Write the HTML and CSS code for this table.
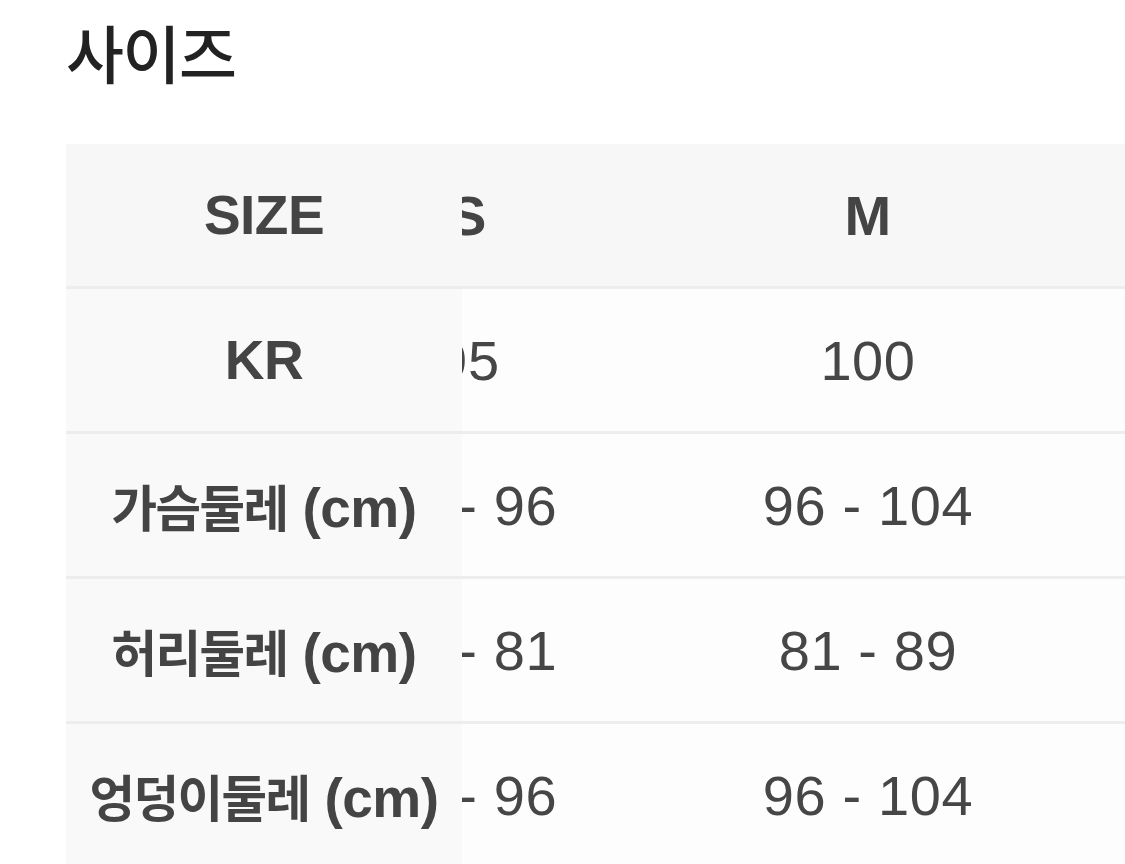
FILE: index.html
```html
<!DOCTYPE html>
<html lang="ko">
<head>
<meta charset="utf-8">
<title>사이즈</title>
<link rel="stylesheet" href="styles.css">
</head>
<body>
<section class="size-section">
  <h2 class="size-title">사이즈</h2>
  <div class="size-table">
    <div class="col col-fixed">
      <div class="cell cell-head cell-label"><span>SIZE</span></div>
      <div class="cell cell-label"><span>KR</span></div>
      <div class="cell cell-label"><span><span class="ko">가슴둘레</span> (cm)</span></div>
      <div class="cell cell-label"><span><span class="ko">허리둘레</span> (cm)</span></div>
      <div class="cell cell-label"><span><span class="ko">엉덩이둘레</span> (cm)</span></div>
    </div>
    <div class="scroll">
      <div class="track">
        <div class="col">
          <div class="cell cell-head">S</div>
          <div class="cell">95</div>
          <div class="cell">88 - 96</div>
          <div class="cell">73 - 81</div>
          <div class="cell">88 - 96</div>
        </div>
        <div class="col">
          <div class="cell cell-head">M</div>
          <div class="cell">100</div>
          <div class="cell">96 - 104</div>
          <div class="cell">81 - 89</div>
          <div class="cell">96 - 104</div>
        </div>
        <div class="col">
          <div class="cell cell-head">L</div>
          <div class="cell">105</div>
          <div class="cell">104 - 112</div>
          <div class="cell">89 - 97</div>
          <div class="cell">104 - 112</div>
        </div>
      </div>
    </div>
  </div>
</section>
</body>
</html>
```

FILE: styles.css
```css
html, body {
  margin: 0;
  padding: 0;
  background: #ffffff;
}

body {
  font-family: "Liberation Sans", "Noto Sans CJK KR", sans-serif;
  color: #444444;
  overflow: hidden;
}

.size-section {
  padding-left: 66px;
}

.size-title {
  margin: 0;
  padding-top: 15px;
  height: 144px;
  box-sizing: border-box;
  font-family: "Noto Sans CJK KR", sans-serif;
  font-size: 63px;
  font-weight: 500;
  line-height: 72px;
  color: #222222;
  letter-spacing: -1.5px;
}

.size-table {
  display: flex;
  overflow: hidden;
}

.col {
  display: flex;
  flex-direction: column;
  width: 400px;
  flex: 0 0 400px;
}

.col-fixed {
  width: 396px;
  flex: 0 0 396px;
  background: #f9f9f9;
  position: relative;
  z-index: 1;
}

.scroll {
  flex: 1;
  overflow: hidden;
}

.track {
  display: flex;
  margin-left: -194px;
}

.cell {
  height: 142px;
  border-bottom: 3px solid #ededed;
  display: flex;
  align-items: center;
  justify-content: center;
  font-size: 56px;
  letter-spacing: 0.6px;
  white-space: nowrap;
  background: #fdfdfd;
  color: #464646;
}

.col-fixed .cell {
  background: #f9f9f9;
}

.cell-head,
.col .cell-head {
  background: #f7f7f7;
}

.cell-label,
.cell-head {
  font-weight: 700;
  color: #444444;
}

.cell-label {
  font-size: 55px;
  letter-spacing: -0.5px;
}

.ko {
  font-family: "Noto Sans CJK KR", sans-serif;
  font-size: 0.9em;
  letter-spacing: -1.5px;
  font-weight: 700;
}
```
